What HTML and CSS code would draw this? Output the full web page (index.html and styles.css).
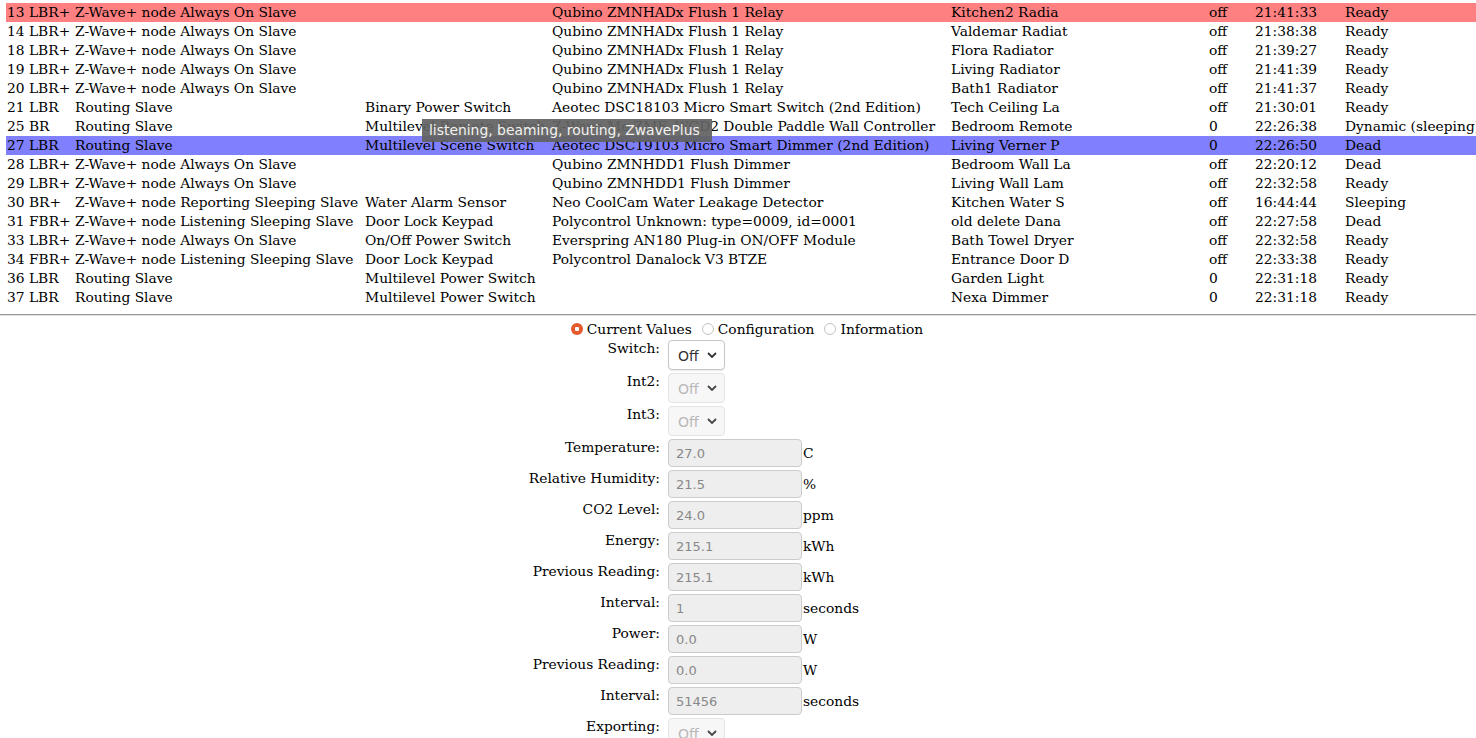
FILE: index.html
```html
<!DOCTYPE html>
<html lang="en">
<head>
    <meta charset="UTF-8">
    <title>Z-Wave Nodes</title>
    <link rel="stylesheet" href="styles.css">
</head>
<body>
    <div class="nodes">
        <table class="node-list">
            <colgroup>
                <col class="c-id"><col class="c-type"><col class="c-class"><col class="c-product">
                <col class="c-name"><col class="c-value"><col class="c-time"><col class="c-status">
            </colgroup>
            <tr class="selected"><td>13 LBR+</td><td>Z-Wave+ node Always On Slave</td><td></td><td>Qubino ZMNHADx Flush 1 Relay</td><td>Kitchen2 Radia</td><td>off</td><td>21:41:33</td><td>Ready</td></tr>
            <tr><td>14 LBR+</td><td>Z-Wave+ node Always On Slave</td><td></td><td>Qubino ZMNHADx Flush 1 Relay</td><td>Valdemar Radiat</td><td>off</td><td>21:38:38</td><td>Ready</td></tr>
            <tr><td>18 LBR+</td><td>Z-Wave+ node Always On Slave</td><td></td><td>Qubino ZMNHADx Flush 1 Relay</td><td>Flora Radiator</td><td>off</td><td>21:39:27</td><td>Ready</td></tr>
            <tr><td>19 LBR+</td><td>Z-Wave+ node Always On Slave</td><td></td><td>Qubino ZMNHADx Flush 1 Relay</td><td>Living Radiator</td><td>off</td><td>21:41:39</td><td>Ready</td></tr>
            <tr><td>20 LBR+</td><td>Z-Wave+ node Always On Slave</td><td></td><td>Qubino ZMNHADx Flush 1 Relay</td><td>Bath1 Radiator</td><td>off</td><td>21:41:37</td><td>Ready</td></tr>
            <tr><td>21 LBR</td><td>Routing Slave</td><td>Binary Power Switch</td><td>Aeotec DSC18103 Micro Smart Switch (2nd Edition)</td><td>Tech Ceiling La</td><td>off</td><td>21:30:01</td><td>Ready</td></tr>
            <tr><td>25 BR</td><td>Routing Slave</td><td>Multilevel Remote Switch</td><td>Z-Wave.Me ZME_WCD2 Double Paddle Wall Controller</td><td>Bedroom Remote</td><td>0</td><td>22:26:38</td><td>Dynamic (sleeping)</td></tr>
            <tr class="hover"><td>27 LBR</td><td>Routing Slave</td><td>Multilevel Scene Switch</td><td>Aeotec DSC19103 Micro Smart Dimmer (2nd Edition)</td><td>Living Verner P</td><td>0</td><td>22:26:50</td><td>Dead</td></tr>
            <tr><td>28 LBR+</td><td>Z-Wave+ node Always On Slave</td><td></td><td>Qubino ZMNHDD1 Flush Dimmer</td><td>Bedroom Wall La</td><td>off</td><td>22:20:12</td><td>Dead</td></tr>
            <tr><td>29 LBR+</td><td>Z-Wave+ node Always On Slave</td><td></td><td>Qubino ZMNHDD1 Flush Dimmer</td><td>Living Wall Lam</td><td>off</td><td>22:32:58</td><td>Ready</td></tr>
            <tr><td>30 BR+</td><td>Z-Wave+ node Reporting Sleeping Slave</td><td>Water Alarm Sensor</td><td>Neo CoolCam Water Leakage Detector</td><td>Kitchen Water S</td><td>off</td><td>16:44:44</td><td>Sleeping</td></tr>
            <tr><td>31 FBR+</td><td>Z-Wave+ node Listening Sleeping Slave</td><td>Door Lock Keypad</td><td>Polycontrol Unknown: type=0009, id=0001</td><td>old delete Dana</td><td>off</td><td>22:27:58</td><td>Dead</td></tr>
            <tr><td>33 LBR+</td><td>Z-Wave+ node Always On Slave</td><td>On/Off Power Switch</td><td>Everspring AN180 Plug-in ON/OFF Module</td><td>Bath Towel Dryer</td><td>off</td><td>22:32:58</td><td>Ready</td></tr>
            <tr><td>34 FBR+</td><td>Z-Wave+ node Listening Sleeping Slave</td><td>Door Lock Keypad</td><td>Polycontrol Danalock V3 BTZE</td><td>Entrance Door D</td><td>off</td><td>22:33:38</td><td>Ready</td></tr>
            <tr><td>36 LBR</td><td>Routing Slave</td><td>Multilevel Power Switch</td><td></td><td>Garden Light</td><td>0</td><td>22:31:18</td><td>Ready</td></tr>
            <tr><td>37 LBR</td><td>Routing Slave</td><td>Multilevel Power Switch</td><td></td><td>Nexa Dimmer</td><td>0</td><td>22:31:18</td><td>Ready</td></tr>
        </table>
        <div class="tooltip">listening, beaming, routing, ZwavePlus</div>
    </div>
    <hr>
    <form class="node-panel">
        <div class="tabs">
            <label><input type="radio" name="tab" checked>Current Values</label>
            <label><input type="radio" name="tab">Configuration</label>
            <label><input type="radio" name="tab">Information</label>
        </div>
        <div class="values">
            <label>Switch:</label>
            <div><span class="select-wrap"><select><option>Off</option><option>On</option></select><svg class="chev" width="10" height="6" viewBox="0 0 10 6"><path d="M1 1l4 4 4-4" fill="none" stroke="#333" stroke-width="1.8"/></svg></span></div>

            <label>Int2:</label>
            <div><span class="select-wrap"><select disabled><option>Off</option></select><svg class="chev" width="10" height="6" viewBox="0 0 10 6"><path d="M1 1l4 4 4-4" fill="none" stroke="#444" stroke-width="1.8"/></svg></span></div>

            <label>Int3:</label>
            <div><span class="select-wrap"><select disabled><option>Off</option></select><svg class="chev" width="10" height="6" viewBox="0 0 10 6"><path d="M1 1l4 4 4-4" fill="none" stroke="#444" stroke-width="1.8"/></svg></span></div>

            <label>Temperature:</label>
            <div><input type="text" value="27.0" readonly><span class="unit">C</span></div>

            <label>Relative Humidity:</label>
            <div><input type="text" value="21.5" readonly><span class="unit">%</span></div>

            <label>CO2 Level:</label>
            <div><input type="text" value="24.0" readonly><span class="unit">ppm</span></div>

            <label>Energy:</label>
            <div><input type="text" value="215.1" readonly><span class="unit">kWh</span></div>

            <label>Previous Reading:</label>
            <div><input type="text" value="215.1" readonly><span class="unit">kWh</span></div>

            <label>Interval:</label>
            <div><input type="text" value="1" readonly><span class="unit">seconds</span></div>

            <label>Power:</label>
            <div><input type="text" value="0.0" readonly><span class="unit">W</span></div>

            <label>Previous Reading:</label>
            <div><input type="text" value="0.0" readonly><span class="unit">W</span></div>

            <label>Interval:</label>
            <div><input type="text" value="51456" readonly><span class="unit">seconds</span></div>

            <label>Exporting:</label>
            <div><span class="select-wrap"><select disabled><option>Off</option></select><svg class="chev" width="10" height="6" viewBox="0 0 10 6"><path d="M1 1l4 4 4-4" fill="none" stroke="#444" stroke-width="1.8"/></svg></span></div>
        </div>
    </form>
</body>
</html>
```

FILE: styles.css
```css
body {
    margin: 0;
    font-family: "DejaVu Serif", serif;
    font-size: 13.8px;
    color: #000;
    background: #fff;
    overflow-x: hidden;
}

.nodes {
    position: relative;
    padding: 3px 0 0 6px;
}

.node-list {
    border-collapse: collapse;
    table-layout: fixed;
    width: 1470px;
}

.node-list td {
    padding: 1px;
    white-space: nowrap;
    line-height: 17px;
    vertical-align: top;
}

.c-id { width: 68px; }
.c-type { width: 290px; }
.c-class { width: 187px; }
.c-product { width: 399px; }
.c-name { width: 258px; }
.c-value { width: 46px; }
.c-time { width: 90px; }
.c-status { width: 132px; }

.node-list tr.selected {
    background-color: #ff8080;
}

.node-list tr.hover {
    background-color: #8080ff;
}

/* hover tooltip for the flags column */
.tooltip {
    position: absolute;
    left: 422px;
    top: 119px;
    padding: 3px 12px 4px 7px;
    background: rgba(98, 98, 98, 0.93);
    color: #f2f2f2;
    font-family: "DejaVu Sans", sans-serif;
    font-size: 13.9px;
    line-height: 16px;
}

hr {
    margin: 7px 0 0;
    border: 0;
    border-top: 1px solid #9a9a9a;
    border-bottom: 1px solid #e0e0e0;
}

.tabs {
    display: flex;
    justify-content: center;
    gap: 10px;
    padding: 5px 0 0 18px;
    line-height: 17px;
}

.tabs input {
    appearance: none;
    width: 12px;
    height: 12px;
    margin: 0 4px 0 0;
    border: 1px solid #c4c4c4;
    border-radius: 50%;
    background: #fff;
    vertical-align: -1px;
}

.tabs input:checked {
    border: 0;
    background: radial-gradient(circle, #fff 0 2px, #e4592b 2.5px);
}

.values {
    display: grid;
    grid-template-columns: 1fr 808px;
    column-gap: 8px;
    row-gap: 3px;
    margin-top: 2px;
}

.values label {
    text-align: right;
    line-height: 17px;
}

.values input[type="text"] {
    box-sizing: border-box;
    width: 134px;
    height: 28px;
    margin: 0;
    padding: 0 7px;
    border: 1px solid #ccc;
    border-radius: 4px;
    background: #eee;
    color: #888;
    font-family: "DejaVu Sans", sans-serif;
    font-size: 13px;
    outline: none;
}

.unit {
    margin-left: 1px;
}

.select-wrap {
    position: relative;
    display: inline-block;
}

.select-wrap select {
    appearance: none;
    box-sizing: border-box;
    width: 57px;
    height: 30px;
    margin: 0;
    padding: 1px 0 0 9px;
    border: 1px solid #c6c6c6;
    border-radius: 4px;
    background: #fff;
    color: #333;
    font-family: "DejaVu Sans", sans-serif;
    font-size: 14px;
    box-shadow: 0 1px 1px rgba(0, 0, 0, 0.08);
}

.select-wrap select:disabled {
    background: #f4f4f4;
    border-color: #d8d8d8;
    color: #9a9a9a;
    box-shadow: none;
}

.chev {
    position: absolute;
    left: 39px;
    top: 12px;
    pointer-events: none;
}
```
